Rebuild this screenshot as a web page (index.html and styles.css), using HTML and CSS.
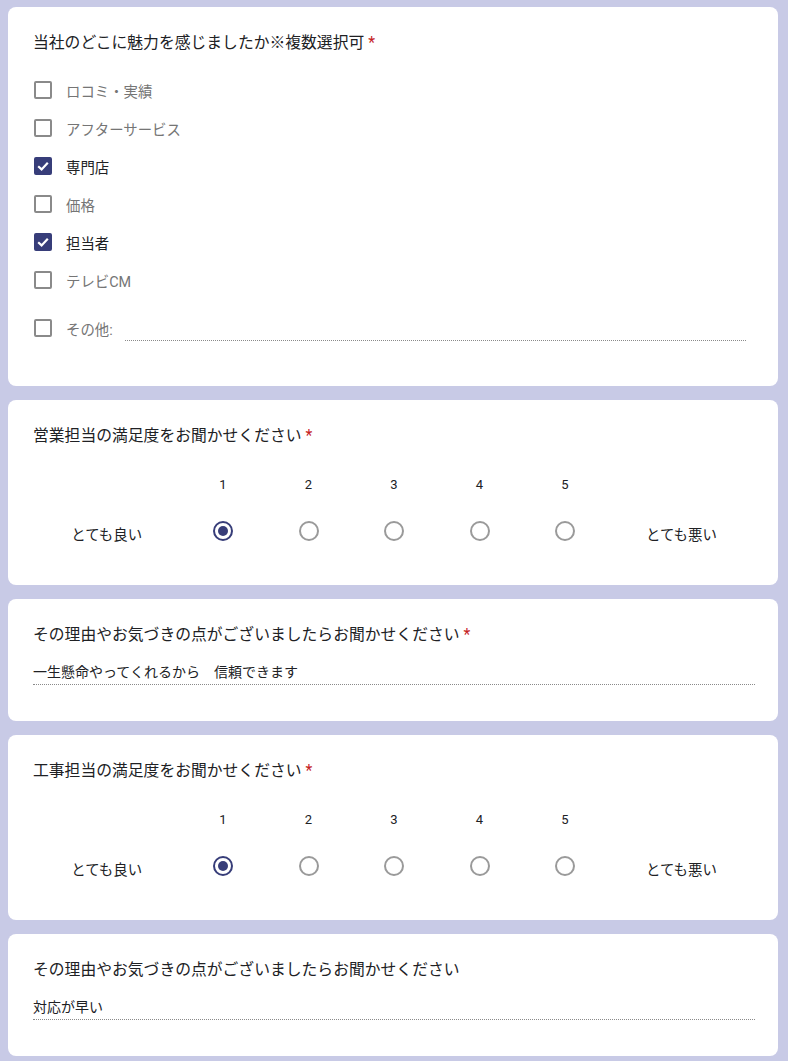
FILE: index.html
```html
<!DOCTYPE html>
<html lang="ja">

<head>
    <meta charset="utf8">
    <title>アンケート</title>
    <link rel="stylesheet" href="styles.css">
</head>

<body>
    <div class="card">
        <div class="title">当社のどこに魅力を感じましたか※複数選択可<span class="req">*</span></div>
        <div class="checks">
            <div class="check-row"><span class="box"></span><span class="label">ロコミ・実績</span></div>
            <div class="check-row"><span class="box"></span><span class="label">アフターサービス</span></div>
            <div class="check-row checked">
                <span class="box"><svg viewBox="0 0 18 18" width="18" height="18"><path d="M4.2 9.2 L7.6 12.4 L13.8 5.8" fill="none" stroke="#fff" stroke-width="2.2"/></svg></span>
                <span class="label">専門店</span>
            </div>
            <div class="check-row"><span class="box"></span><span class="label">価格</span></div>
            <div class="check-row checked">
                <span class="box"><svg viewBox="0 0 18 18" width="18" height="18"><path d="M4.2 9.2 L7.6 12.4 L13.8 5.8" fill="none" stroke="#fff" stroke-width="2.2"/></svg></span>
                <span class="label">担当者</span>
            </div>
            <div class="check-row"><span class="box"></span><span class="label">テレビCM</span></div>
            <div class="check-row other">
                <span class="box"></span><span class="label">その他:</span>
                <div class="other-input"></div>
            </div>
        </div>
    </div>

    <div class="card">
        <div class="title">営業担当の満足度をお聞かせください<span class="req">*</span></div>
        <div class="scale">
            <div></div>
            <div class="num">1</div>
            <div class="num">2</div>
            <div class="num">3</div>
            <div class="num">4</div>
            <div class="num">5</div>
            <div></div>

            <div class="end">とても良い</div>
            <div class="opt"><span class="radio on"></span></div>
            <div class="opt"><span class="radio"></span></div>
            <div class="opt"><span class="radio"></span></div>
            <div class="opt"><span class="radio"></span></div>
            <div class="opt"><span class="radio"></span></div>
            <div class="end">とても悪い</div>
        </div>
    </div>

    <div class="card">
        <div class="title">その理由やお気づきの点がございましたらお聞かせください<span class="req">*</span></div>
        <div class="answer">一生懸命やってくれるから　信頼できます</div>
    </div>

    <div class="card">
        <div class="title">工事担当の満足度をお聞かせください<span class="req">*</span></div>
        <div class="scale">
            <div></div>
            <div class="num">1</div>
            <div class="num">2</div>
            <div class="num">3</div>
            <div class="num">4</div>
            <div class="num">5</div>
            <div></div>

            <div class="end">とても良い</div>
            <div class="opt"><span class="radio on"></span></div>
            <div class="opt"><span class="radio"></span></div>
            <div class="opt"><span class="radio"></span></div>
            <div class="opt"><span class="radio"></span></div>
            <div class="opt"><span class="radio"></span></div>
            <div class="end">とても悪い</div>
        </div>
    </div>

    <div class="card">
        <div class="title">その理由やお気づきの点がございましたらお聞かせください</div>
        <div class="answer">対応が早い</div>
    </div>
</body>

</html>
```

FILE: styles.css
```css
* {
    box-sizing: border-box;
}

body {
    margin: 0;
    padding: 7px 10px 0 8px;
    background: #c8cae6;
    font-family: Roboto, "Noto Sans CJK JP", sans-serif;
    color: #202124;
}

.card {
    background: #fff;
    border-radius: 8px;
    padding: 24px 25px 30px 25px;
    margin-bottom: 14px;
}

.title {
    font-size: 15.8px;
    line-height: 24px;
    height: 24px;
}

.req {
    color: #c5221f;
    margin-left: 4px;
}

/* checkboxes */

.checks {
    margin-top: 16px;
    padding-bottom: 9px;
}

.check-row {
    display: flex;
    align-items: center;
    height: 38px;
    padding-left: 1px;
}

.check-row .box {
    width: 18px;
    height: 18px;
    border: 2px solid #8a8a8a;
    border-radius: 2px;
    flex-shrink: 0;
    position: relative;
}

.check-row.checked .box {
    background: #373d79;
    border-color: #373d79;
}

.check-row .box svg {
    position: absolute;
    left: -2px;
    top: -2px;
}

.check-row .label {
    margin-left: 14px;
    font-size: 14.4px;
    color: #757575;
}

.check-row.checked .label {
    color: #202124;
}

.check-row.other {
    margin-top: 10px;
}

.other-input {
    flex-grow: 1;
    height: 24px;
    margin-left: 12px;
    margin-right: 7px;
    margin-top: 1px;
    border-bottom: 1px dotted #8a8a8a;
}

/* linear scale */

.scale {
    display: grid;
    grid-template-columns: 1fr repeat(5, 85.5px) 1fr;
    grid-template-rows: 24px 48px;
    row-gap: 10px;
    margin-top: 25px;
    margin-right: -2px;
}

.scale .num {
    font-size: 13px;
    text-align: center;
    line-height: 24px;
    color: #202124;
}

.scale .end {
    font-size: 14.4px;
    text-align: center;
    line-height: 24px;
    padding-top: 17px;
}

.scale .opt {
    display: flex;
    align-items: center;
    justify-content: center;
}

.radio {
    width: 20px;
    height: 20px;
    border: 2px solid #9a9a9a;
    border-radius: 50%;
    display: flex;
    align-items: center;
    justify-content: center;
}

.radio.on {
    border-color: #373d79;
}

.radio.on:after {
    content: "";
    width: 10px;
    height: 10px;
    border-radius: 50%;
    background: #373d79;
}

/* short answer */

.answer {
    margin-top: 13px;
    font-size: 14px;
    line-height: 24px;
    height: 25px;
    border-bottom: 1px dotted #8a8a8a;
    margin-right: -2px;
    margin-bottom: 6px;
}
```
